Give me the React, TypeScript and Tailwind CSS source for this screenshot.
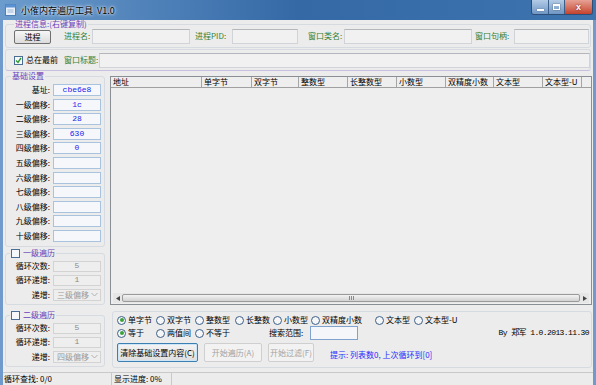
import React from "react";

const baseRows: [string, string][] = [
  ["基址", "cbe6e8"],
  ["一级偏移", "1c"],
  ["二级偏移", "28"],
  ["三级偏移", "630"],
  ["四级偏移", "0"],
  ["五级偏移", ""],
  ["六级偏移", ""],
  ["七级偏移", ""],
  ["八级偏移", ""],
  ["九级偏移", ""],
  ["十级偏移", ""],
];

const columns = [
  { name: "地址", cls: "w-[91px]" },
  { name: "单字节", cls: "w-[50px]" },
  { name: "双字节", cls: "w-[47px]" },
  { name: "整数型", cls: "w-[49px]" },
  { name: "长整数型", cls: "w-[49px]" },
  { name: "小数型", cls: "w-[49px]" },
  { name: "双精度小数", cls: "w-[48px]" },
  { name: "文本型", cls: "w-[49px]" },
  { name: "文本型-U", cls: "w-[39px]" },
];

const typeRadios = [
  { name: "单字节", cls: "w-[39px]", on: true },
  { name: "双字节", cls: "w-[39px]" },
  { name: "整数型", cls: "w-[40px]" },
  { name: "长整数", cls: "w-[38px]" },
  { name: "小数型", cls: "w-[38px]" },
  { name: "双精度小数", cls: "w-[64px]" },
  { name: "文本型", cls: "w-[39px]" },
  { name: "文本型-U", cls: "w-[50px]" },
];

const cmpRadios = [
  { name: "等于", cls: "w-[39px]", on: true },
  { name: "两值间", cls: "w-[39px]" },
  { name: "不等于", cls: "w-[50px]" },
];

function Radio({ on }: { on?: boolean }) {
  return (
    <span className="w-[9px] h-[9px] rounded-full border border-[#3d5f86] bg-[#f4f6f8] flex items-center justify-center shrink-0">
      {on && <span className="w-[4px] h-[4px] rounded-full bg-[#3aa23a]" />}
    </span>
  );
}

function Check({ on }: { on?: boolean }) {
  return (
    <span className="w-[9px] h-[9px] border border-[#4a6d95] bg-[#f6f8fa] flex items-center justify-center shrink-0">
      {on && (
        <svg width="7" height="7" viewBox="0 0 7 7">
          <path d="M1 3.5 L3 5.5 L6 1" stroke="#2f9a2f" strokeWidth="1.4" fill="none" />
        </svg>
      )}
    </span>
  );
}

function TopInput({ cls }: { cls: string }) {
  return <div className={`h-[15px] border border-[#d0d4d9] border-t-[#b3b6bb] bg-[#f1f1f1] ${cls}`} />;
}

function ValueRow({ label, value }: { label: string; value: string }) {
  return (
    <div className="flex items-center h-[12px]">
      <span className="w-[44px] text-right">{label}:</span>
      <div className="ml-[3px] w-[48px] h-[12px] border border-[#a9c2de] bg-[#f5f7fa] flex items-center justify-center font-['Liberation_Mono',monospace] text-[8px] text-[#2222ee]">
        {value}
      </div>
    </div>
  );
}

function DisabledRow({ label, value }: { label: string; value: string }) {
  return (
    <div className="flex items-center h-[11px]">
      <span className="w-[44px] text-right">{label}:</span>
      <div className="ml-[3px] w-[48px] h-[11px] border border-[#d3d3d3] bg-[#eeeeee] flex items-center justify-center font-['Liberation_Mono',monospace] text-[8px] text-[#8a8a8a]">
        {value}
      </div>
    </div>
  );
}

function ComboRow({ value }: { value: string }) {
  return (
    <div className="flex items-center h-[12px]">
      <span className="w-[44px] text-right">递增:</span>
      <div className="ml-[3px] w-[48px] h-[12px] border border-[#d3d3d3] bg-[#eeeeee] flex items-center pl-[3px] text-[#9a9a9a]">
        <span className="flex-1">{value}</span>
        <svg width="7" height="5" viewBox="0 0 7 5" className="mr-[2px]">
          <path d="M0.5 1 L3.5 4 L6.5 1" stroke="#b0b0b0" strokeWidth="1" fill="none" />
        </svg>
      </div>
    </div>
  );
}

function LoopGroup({ title, combo, cls }: { title: string; combo: string; cls?: string }) {
  return (
    <fieldset className={`border border-[#d5dbe0] rounded-[3px] px-0 pt-[3px] pb-[3px] flex flex-col gap-[3px] ${cls ?? ""}`}>
      <legend className="ml-[4px] px-[1px] flex items-center gap-[3px] text-[#6a3fb8]">
        <Check />
        <span>{title}</span>
      </legend>
      <DisabledRow label="循环次数" value="5" />
      <DisabledRow label="循环递增" value="1" />
      <ComboRow value={combo} />
    </fieldset>
  );
}

function Button({ label, disabled, cls }: { label: string; disabled?: boolean; cls: string }) {
  return (
    <div
      className={
        disabled
          ? `h-[19px] border border-[#cfcfcf] rounded-[2px] bg-[#f2f2f2] text-[#a3a3a3] flex items-center justify-center ${cls}`
          : `h-[19px] border border-[#3c7fb1] rounded-[2px] bg-linear-to-b from-[#f4f4f4] to-[#dedede] shadow-[inset_0_0_0_1px_#cde6f7] flex items-center justify-center ${cls}`
      }
    >
      {label}
    </div>
  );
}

export default function App() {
  return (
    <div className="w-[596px] h-[385px] flex flex-col bg-[#6f9acb] overflow-hidden whitespace-nowrap font-['Noto_Sans_CJK_SC','Liberation_Sans',sans-serif] text-[8px] leading-none text-black">
      {/* Title bar */}
      <div className="h-[20px] shrink-0 flex bg-linear-to-r from-[#6c9ccd] via-[#3469a6] to-[#3d74ae]">
        <div className="flex items-center pl-[5px]">
          <svg width="11" height="12" viewBox="0 0 11 12">
            <rect x="0.5" y="0.5" width="10" height="11" fill="#e8f1fb" stroke="#4d7fb8" />
            <rect x="0.5" y="0.5" width="10" height="3" fill="#5b93d2" />
            <path d="M2.5 6 H8.5 M2.5 8 H8.5" stroke="#9bb6d6" />
          </svg>
          <span className="ml-[5px] text-[9px] [text-shadow:0_0_4px_#ffffff,0_0_2px_#ffffff]">
            小傕内存遍历工具&nbsp;&nbsp;V1.0
          </span>
        </div>
        <div className="ml-auto mr-[3px] flex h-[15px] border border-t-0 border-[#2d4e78] rounded-b-[3px] overflow-hidden">
          <div className="w-[17px] bg-linear-to-b from-[#b3cbe6] to-[#6f96c4] border-r border-[#3c5f8a] flex items-center justify-center">
            <span className="w-[7px] h-[2px] bg-white mt-[5px] shadow-[0_0_1px_#333]" />
          </div>
          <div className="w-[16px] bg-linear-to-b from-[#b3cbe6] to-[#6f96c4] border-r border-[#3c5f8a] flex items-center justify-center">
            <span className="w-[7px] h-[6px] border border-white border-t-2 shadow-[0_0_1px_#333]" />
          </div>
          <div className="w-[27px] bg-linear-to-b from-[#e6a195] to-[#c4412c] flex items-center justify-center text-white text-[9px] font-bold font-['Liberation_Sans',sans-serif] [text-shadow:0_0_2px_#5a1a10]">
            x
          </div>
        </div>
      </div>

      {/* Client area */}
      <div className="flex-1 mx-[3px] bg-[#ececec] flex flex-col min-h-0">
        <fieldset className="mx-[2px] border border-[#d5dbe0] rounded-[3px] px-[8px] pb-[3px] flex items-center">
          <legend className="ml-0 px-[1px] text-[#6a3fb8]">进程信息:(右键复制)</legend>
          <div className="w-[37px] h-[14px] mt-[2px] border border-[#707070] rounded-[2px] bg-linear-to-b from-[#f6f6f6] to-[#dcdcdc] flex items-center justify-center">
            进程
          </div>
          <span className="ml-[13px] w-[28px] text-[#338033]">进程名:</span>
          <TopInput cls="w-[98px]" />
          <span className="ml-[5px] w-[37px] text-[#338033]">进程PID:</span>
          <TopInput cls="w-[66px]" />
          <span className="ml-[10px] w-[36px] text-[#338033]">窗口类名:</span>
          <TopInput cls="w-[128px]" />
          <span className="ml-[3px] w-[39px] text-[#338033]">窗口句柄:</span>
          <TopInput cls="flex-1 -mr-[7px]" />
        </fieldset>

        <div className="mx-[2px] mt-[1px] h-[22px] border border-[#d5dbe0] border-b-[#c8bfe0] rounded-[3px] flex items-center pl-[8px]">
          <Check on />
          <span className="ml-[3px]">总在最前</span>
          <span className="ml-[6px] w-[35px] text-[#338033]">窗口标题:</span>
          <TopInput cls="flex-1" />
        </div>

        {/* Main area */}
        <div className="flex-1 flex min-h-0 mt-[1px]">
          <div className="w-[100px] ml-[2px] flex flex-col gap-[2px]">
            <fieldset className="border border-[#d5dbe0] rounded-[3px] pt-[4px] pb-[4px] flex flex-col gap-[2.6px]">
              <legend className="ml-[5px] px-[1px] text-[#6a3fb8]">基础设置</legend>
              {baseRows.map(([l, v]) => (
                <ValueRow key={l} label={l} value={v} />
              ))}
            </fieldset>
            <LoopGroup title="一级遍历" combo="三级偏移" />
            <LoopGroup title="二级遍历" combo="四级偏移" cls="mt-[4px]" />
          </div>

          <div className="flex-1 ml-[5px] mr-[1px] flex flex-col">
            {/* List view */}
            <div className="h-[229px] mt-[4px] border border-[#8a8f96] bg-[#eeeeee] flex flex-col">
              <div className="h-[11px] flex border-b border-[#a0a0a0]">
                {columns.map((c) => (
                  <div key={c.name} className={`${c.cls} shrink-0 border-r border-[#a5a5a5] pl-[2px] flex items-center`}>
                    {c.name}
                  </div>
                ))}
              </div>
              <div className="flex-1" />
              <div className="h-[10px] mx-[2px] mb-[1px] flex items-center bg-[#e6e6e6]">
                <div className="w-[9px] flex justify-center">
                  <svg width="4" height="5" viewBox="0 0 4 5">
                    <path d="M4 0 L0 2.5 L4 5 Z" fill="#444" />
                  </svg>
                </div>
                <div className="flex-1 h-[8px] border border-[#9a9a9a] rounded-[2px] bg-linear-to-b from-[#f3f3f3] to-[#d2d2d2] flex items-center justify-center">
                  <span className="w-[5px] h-[4px] border-x border-[#8a8a8a] flex justify-center">
                    <span className="w-px h-full bg-[#8a8a8a]" />
                  </span>
                </div>
                <div className="w-[9px] flex justify-center">
                  <svg width="4" height="5" viewBox="0 0 4 5">
                    <path d="M0 0 L4 2.5 L0 5 Z" fill="#444" />
                  </svg>
                </div>
              </div>
            </div>

            {/* Search options */}
            <div className="mt-[6px] h-[57px] ml-[2px] border border-[#d5dbe0] rounded-[3px] pl-[4px] pt-[3px] flex flex-col">
              <div className="flex items-center h-[10px]">
                {typeRadios.map((r) => (
                  <div key={r.name} className={`${r.cls} flex items-center gap-[2px]`}>
                    <Radio on={r.on} />
                    <span>{r.name}</span>
                  </div>
                ))}
              </div>
              <div className="flex items-center h-[14px] mt-[1px]">
                {cmpRadios.map((r) => (
                  <div key={r.name} className={`${r.cls} flex items-center gap-[2px]`}>
                    <Radio on={r.on} />
                    <span>{r.name}</span>
                  </div>
                ))}
                <span className="ml-[24px] w-[41px]">搜索范围:</span>
                <div className="w-[48px] h-[14px] border border-[#7fa3cc] bg-[#f4f6f9]" />
                <span className="ml-auto mr-[2px] text-[8px] font-['Liberation_Mono','Noto_Sans_CJK_SC',monospace] tracking-[-0.6px]">
                  By 郑军 1.0.2013.11.30
                </span>
              </div>
              <div className="flex items-end mt-[3px]">
                <Button label="清除基础设置内容(C)" cls="w-[81px]" />
                <Button label="开始遍历(A)" disabled cls="ml-[6px] w-[58px]" />
                <Button label="开始过滤(F)" disabled cls="ml-[6px] w-[46px]" />
                <span className="ml-[16px] mb-[3px] text-[#2a2aff]">提示: 列表数0, 上次循环到[0]</span>
              </div>
            </div>
          </div>
        </div>

        {/* Status bar */}
        <div className="h-[13px] mt-[3px] border-t border-[#c9c9c9] flex items-center">
          <span className="w-[108px] pl-[1px]">循环查找: 0/0</span>
          <span className="w-[61px] h-full border-l border-r border-[#c9c9c9] flex items-center pl-[2px]">显示进度: 0%</span>
        </div>
      </div>
    </div>
  );
}
